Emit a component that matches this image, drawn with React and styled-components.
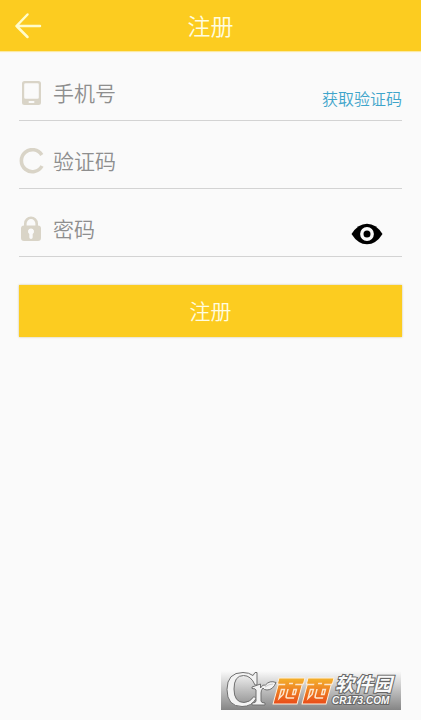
import React, { useState } from "react";
import styled, { createGlobalStyle } from "styled-components";

const GlobalStyle = createGlobalStyle`
  *, *::before, *::after { box-sizing: border-box; }
  body {
    margin: 0;
    background: #fafafa;
    font-family: "Noto Sans CJK SC", "Noto Sans", sans-serif;
    font-weight: 350;
  }
  button, input { font: inherit; }
`;

const Page = styled.div`
  display: flex;
  flex-direction: column;
  min-height: 100vh;
`;

const Header = styled.header`
  display: grid;
  grid-template-columns: 56px 1fr 56px;
  align-items: center;
  height: 51px;
  background: #fccc20;
  box-shadow: 0 1px 1px #fbe9a4;
`;

const BackButton = styled.button`
  display: flex;
  align-items: center;
  justify-content: center;
  height: 51px;
  padding: 0;
  border: 0;
  background: none;
`;

const Title = styled.h1`
  margin: 0;
  padding-bottom: 2px;
  color: #fffde0;
  font-size: 23px;
  line-height: 32px;
  font-weight: 350;
  text-align: center;
`;

const Form = styled.form`
  display: flex;
  flex-direction: column;
  padding: 2px 19px 0;
`;

const Row = styled.div`
  display: flex;
  align-items: center;
  height: 68px;
  padding-top: 13px;
  border-bottom: 1px solid #d3d3d3;
`;

const FieldLabel = styled.label`
  display: flex;
  flex: none;
  width: 34px;
`;

const Input = styled.input`
  flex: 1;
  min-width: 0;
  height: 32px;
  padding: 0 0 2px;
  border: 0;
  outline: 0;
  background: none;
  color: #555;
  font-size: 21px;
  &::placeholder { color: #8e8e8e; opacity: 1; }
`;

const CodeButton = styled.button`
  flex: none;
  margin-top: 9px;
  padding: 0;
  border: 0;
  background: none;
  color: #3fa5cb;
  font-size: 16px;
  line-height: 24px;
`;

const EyeButton = styled.button`
  display: flex;
  flex: none;
  margin: 9px 19px 0 0;
  padding: 0;
  border: 0;
  background: none;
`;

const Submit = styled.button`
  height: 52px;
  margin-top: 28px;
  padding: 0 0 2px;
  border: 0;
  background: #fccc20;
  box-shadow: 0 0 2px #cfc391;
  color: #fffde0;
  font-size: 21px;
`;

const Footer = styled.footer`
  display: flex;
  justify-content: flex-end;
  margin-top: auto;
  padding: 0 20px 10px;
`;

const Brand = styled.div`
  display: flex;
  background: linear-gradient(#fafafa, #c4c4c4 45%, #858585);
`;

const BackIcon = () => (
  <svg width="28" height="28" viewBox="0 0 28 28" fill="none" stroke="#fffccb" strokeWidth="2.5" strokeLinecap="round" strokeLinejoin="round" aria-hidden="true">
    <path d="M26 14H2.500M13.500 2.500L2.500 14l11 11" />
  </svg>
);

const PhoneIcon = () => (
  <svg width="25" height="26" viewBox="0 0 25 26" aria-hidden="true">
    <path fill="#d9d4c7" fillRule="evenodd" d="M5.500 1h14q2.500 0 2.500 2.500v19q0 2.500-2.500 2.500h-14q-2.500 0-2.500-2.500v-19q0-2.500 2.500-2.500zM6.500 3.200q-1.300 0-1.300 1.300v13q0 1.300 1.300 1.300h12q1.300 0 1.300-1.300v-13q0-1.300-1.300-1.300zM10.500 21a1 1 0 0 0 0 2h4a1 1 0 0 0 0-2z" />
  </svg>
);

const CodeIcon = () => (
  <svg width="25" height="26" viewBox="0 0 25 26" fill="none" stroke="#d9d4c7" strokeWidth="3.600" aria-hidden="true">
    <path d="M22.800 7A11 11 0 1 0 23 18" />
  </svg>
);

const LockIcon = () => (
  <svg width="25" height="26" viewBox="0 0 25 26" aria-hidden="true">
    <path fill="none" stroke="#d9d4c7" strokeWidth="2.600" d="M6.300 11V7.500a5.700 5.700 0 0 1 11.400 0V11" />
    <path fill="#d9d4c7" fillRule="evenodd" d="M5 9.500h14q3 0 3 3V22q0 3-3 3H5q-3 0-3-3v-9.500q0-3 3-3zM12 12.500a3 3 0 0 0-1.700 5.500v3.300a1.700 1.700 0 0 0 3.400 0V18A3 3 0 0 0 12 12.500z" />
  </svg>
);

const EyeIcon = () => (
  <svg width="32" height="22" viewBox="0 0 32 22" aria-hidden="true">
    <path d="M.5 11Q7 .7 16 .7T31.500 11Q25 21.300 16 21.300T.5 11z" />
    <circle cx="16" cy="11" r="5.200" fill="#000" stroke="#fafafa" strokeWidth="3.400" />
  </svg>
);

const BrandGlyph = ({ x }) => (
  <g transform={`translate(${x} 7) skewX(-15)`}>
    <path fill="url(#orange)" stroke="#fff0dc" strokeWidth="1" strokeLinejoin="round" d="M0 0h26v6h-1v20H1V6H0z" />
    <path fill="none" stroke="#fde6cd" strokeWidth="1.500" d="M1 6.500h7M18 6.500h7M11.500 5.500h4M5.500 11.500h3v5l-3 4zM12 11v7q0 2 2 2h6.500M18 11.500h2.500v5H18z" />
  </g>
);

const BrandLogo = () => (
  <svg width="180" height="39" viewBox="0 0 180 39" role="img" aria-label="西西软件园 CR173.COM">
    <defs>
      <linearGradient id="orange" x1="0" y1="0" x2="0" y2="1">
        <stop offset="0" stopColor="#f3b22c" />
        <stop offset="1" stopColor="#e94a18" />
      </linearGradient>
    </defs>
    <g fill="#f3f3f3" stroke="#707070" strokeWidth="1" strokeLinejoin="round">
      <path d="M36 1.500V14h-2Q30 4.500 22.500 4.500 13 4.500 13 18t10 13.500q6 0 10-6l2 2Q31 35.500 21 35.500 6 35.500 6 18.500 6 1.500 22 1.500q6 0 10 3l2-3z" />
      <path d="M31 16l8.500-3v4q2-4 5-3 4-5 10.500-2.500Q52 19 46 19q-3 0-4-2-2 2-2 5v8q0 2 4 2v2H31v-2q4 0 4-2V19q0-1.500-4-1.500z" />
      <path fill="none" stroke="#ccc" d="M44 16q4-3 8-3" />
    </g>
    <BrandGlyph x={58} />
    <BrandGlyph x={87} />
    <g fill="#fafafa" stroke="#666" strokeWidth="2" paintOrder="stroke" fontStyle="italic" fontWeight="700">
      <text x="114" y="20" fontSize="19" fontFamily="'Liberation Sans', 'Noto Sans CJK SC', sans-serif">软件园</text>
      <text x="111" y="33" fontSize="10" fontFamily="'Liberation Sans', sans-serif">CR173.COM</text>
    </g>
  </svg>
);

export default function App() {
  const [visible, setVisible] = useState(false);
  return (
    <Page>
      <GlobalStyle />
      <Header>
        <BackButton type="button" aria-label="返回"><BackIcon /></BackButton>
        <Title>注册</Title>
      </Header>
      <Form onSubmit={(e) => e.preventDefault()}>
        <Row>
          <FieldLabel htmlFor="phone" aria-label="手机号"><PhoneIcon /></FieldLabel>
          <Input id="phone" type="tel" placeholder="手机号" />
          <CodeButton type="button">获取验证码</CodeButton>
        </Row>
        <Row>
          <FieldLabel htmlFor="code" aria-label="验证码"><CodeIcon /></FieldLabel>
          <Input id="code" type="text" placeholder="验证码" />
        </Row>
        <Row>
          <FieldLabel htmlFor="password" aria-label="密码"><LockIcon /></FieldLabel>
          <Input id="password" type={visible ? "text" : "password"} placeholder="密码" />
          <EyeButton type="button" aria-label="显示密码" aria-pressed={visible} onClick={() => setVisible(!visible)}>
            <EyeIcon />
          </EyeButton>
        </Row>
        <Submit type="submit">注册</Submit>
      </Form>
      <Footer>
        <Brand><BrandLogo /></Brand>
      </Footer>
    </Page>
  );
}
